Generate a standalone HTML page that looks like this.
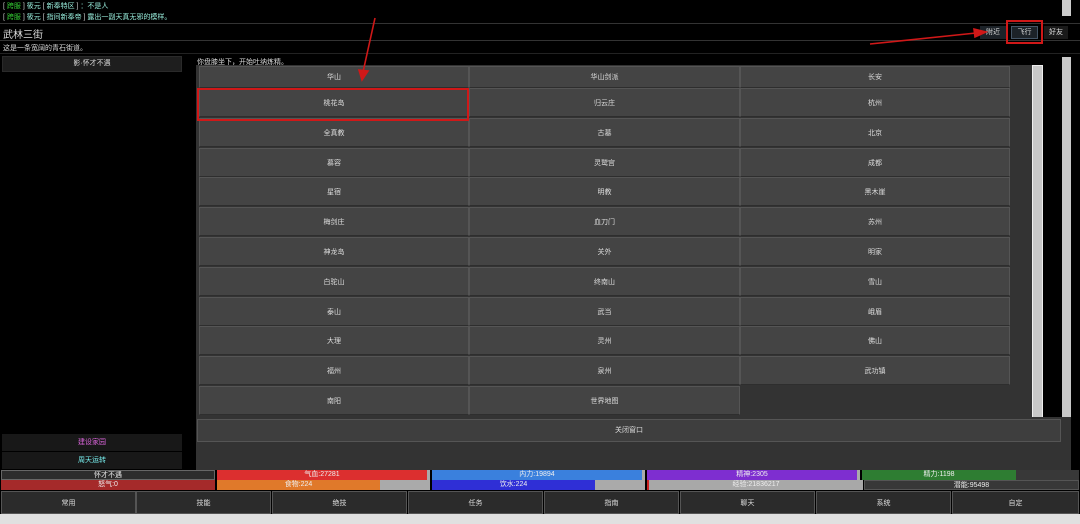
<!DOCTYPE html>
<html><head><meta charset="utf-8"><style>
*{margin:0;padding:0;box-sizing:border-box}
body{width:1080px;height:524px;background:#000;overflow:hidden;position:relative;font-family:"Liberation Sans","Noto Sans CJK SC",sans-serif;color:#ddd}
.a{position:absolute}
.t{font-size:7px;white-space:nowrap}
.cell{position:absolute;background:#444;border:1px solid #555;border-bottom-color:#2e2e2e;font-size:7px;color:#ddd;display:flex;align-items:center;justify-content:center}
.bar{position:absolute;height:10px;font-size:7px;color:#eee;text-align:center;line-height:10px}
.btn{position:absolute;top:491px;height:23px;width:135px;background:#2b2b2b;border:1px solid #555;font-size:7px;color:#ddd;display:flex;align-items:center;justify-content:center}
</style></head><body>
<div class="a t" style="left:3px;top:1px;color:#9ed"><span style="color:#ccc">[ </span><span style="color:#3c3">跨服</span><span style="color:#ccc"> ]</span> 筱元 <span style="color:#ccc">[</span> 新奉特区 <span style="color:#ccc">]</span> ：不是人</div>
<div class="a t" style="left:3px;top:12px;color:#9ed"><span style="color:#ccc">[ </span><span style="color:#3c3">跨服</span><span style="color:#ccc"> ]</span> 筱元 <span style="color:#ccc">[</span> 指间新奉帝 <span style="color:#ccc">]</span> 露出一副天真无邪的模样。</div>
<div class="a" style="left:1062px;top:0;width:9px;height:16px;background:#ccc"></div>
<div class="a" style="left:0;top:23px;width:1080px;height:1px;background:#333"></div>
<div class="a" style="left:3px;top:26px;font-size:10px;color:#ddd">武林三街</div>
<div class="a" style="left:0;top:40px;width:1080px;height:1px;background:#333"></div>
<div class="a" style="left:980px;top:26px;width:26px;height:13px;background:#1c2228;font-size:7px;line-height:13px;text-align:center">附近</div>
<div class="a" style="left:1011px;top:26px;width:27px;height:13px;background:#1c2228;border:1px solid #456;font-size:7px;line-height:11px;text-align:center">飞行</div>
<div class="a" style="left:1006px;top:20px;width:37px;height:24px;border:2px solid #d01818"></div>
<div class="a" style="left:1044px;top:26px;width:24px;height:13px;background:#1a1a1a;font-size:7px;line-height:13px;text-align:center">好友</div>
<div class="a t" style="left:3px;top:43px;color:#ddd">这是一条宽阔的青石街道。</div>
<div class="a" style="left:0;top:53px;width:1080px;height:1px;background:#222"></div>
<div class="a" style="left:2px;top:56px;width:180px;height:16px;background:#1e1e1e;border:1px solid #2a2a2a;font-size:7px;line-height:14px;text-align:center">影·怀才不遇</div>
<div class="a t" style="left:197px;top:57px">你盘膝坐下，开始吐纳炼精。</div>
<div class="a" style="left:196px;top:65px;width:847px;height:354px;background:#333"></div>
<div class="a" style="left:1032px;top:65px;width:11px;height:353px;background:#c8c8c8;border:1px solid #eee"></div>
<div class="a" style="left:1062px;top:57px;width:9px;height:360px;background:#c8c8c8"></div>
<div class="a" style="left:196px;top:417px;width:875px;height:53px;background:#333"></div>
<div class="a" style="left:197px;top:419px;width:864px;height:23px;background:#3e3e3e;border:1px solid #555;font-size:7px;line-height:21px;text-align:center">关闭窗口</div>
<div id="g"></div>
<div class="a" style="left:197px;top:88px;width:272px;height:33px;border:2px solid #d01818"></div>
<svg class="a" style="left:0;top:0" width="1080" height="524"><g stroke="#d01818" stroke-width="1.6" fill="#d01818"><line x1="375" y1="18" x2="363" y2="72"/><polygon points="359,70 368,71 362,80"/><line x1="870" y1="44" x2="976" y2="33"/><polygon points="974,29 986,32 975,37"/></g></svg>
<div class="a" style="left:2px;top:434px;width:180px;height:17px;background:#181818;font-size:7px;line-height:17px;text-align:center;color:#d6d">建设家园</div>
<div class="a" style="left:2px;top:452px;width:180px;height:17px;background:#181818;font-size:7px;line-height:17px;text-align:center;color:#7ee">周天运转</div>
<div class="bar" style="left:1px;top:470px;width:214px;background:#2c2c2c;border:1px solid #666">怀才不遇</div>
<div class="bar" style="left:217px;top:470px;width:213px;background:#aaa"></div><div class="bar" style="left:217px;top:470px;width:210px;background:#dc2f2f">气血:27281</div>
<div class="bar" style="left:432px;top:470px;width:213px;background:#aaa"></div><div class="bar" style="left:432px;top:470px;width:210px;background:#3a80dd">内力:19894</div>
<div class="bar" style="left:647px;top:470px;width:213px;background:#aaa"></div><div class="bar" style="left:647px;top:470px;width:210px;background:#7e2ed0">精神:2305</div>
<div class="bar" style="left:862px;top:470px;width:217px;background:#383838"></div><div class="bar" style="left:862px;top:470px;width:154px;background:#2e7d32">精力:1198</div>
<div class="bar" style="left:1px;top:480px;width:214px;background:#a52a2a">怒气:0</div>
<div class="bar" style="left:217px;top:480px;width:213px;background:#aaa"></div><div class="bar" style="left:217px;top:480px;width:163px;background:#e0792a">食物:224</div>
<div class="bar" style="left:432px;top:480px;width:213px;background:#aaa"></div><div class="bar" style="left:432px;top:480px;width:163px;background:#2f2fd6">饮水:224</div>
<div class="bar" style="left:647px;top:480px;width:216px;background:#a8a8a8;border-left:2px solid #c22">经验:21836217</div>
<div class="bar" style="left:864px;top:480px;width:215px;background:#383838;border:1px solid #555">潜能:95498</div>
<div class="btn" style="left:1px">常用</div><div class="btn" style="left:136px">技能</div><div class="btn" style="left:272px">绝技</div><div class="btn" style="left:408px">任务</div><div class="btn" style="left:544px">指南</div><div class="btn" style="left:680px">聊天</div><div class="btn" style="left:816px">系统</div><div class="btn" style="left:952px;width:127px">自定</div>
<div class="a" style="left:0;top:514px;width:1080px;height:10px;background:#e0e0e0"></div>
<script>
var n=["华山","华山剑派","长安","桃花岛","归云庄","杭州","全真教","古墓","北京","慕容","灵鹫宫","成都","星宿","明教","黑木崖","梅剑庄","血刀门","苏州","神龙岛","关外","明家","白驼山","终南山","雪山","泰山","武当","峨眉","大理","灵州","佛山","福州","泉州","武功镇","南阳","世界地图"];
var xs=[199,469,740],ws=[270,271,270],h="";
for(var i=0;i<n.length;i++){var r=Math.floor(i/3),c=i%3;var y,hh;if(r==0){y=66;hh=22;}else{y=Math.round(88+(r-1)*29.8);hh=29;}h+='<div class="cell" style="left:'+xs[c]+'px;top:'+y+'px;width:'+ws[c]+'px;height:'+hh+'px">'+n[i]+'</div>';}
document.getElementById("g").innerHTML=h;
</script>
</body></html>
